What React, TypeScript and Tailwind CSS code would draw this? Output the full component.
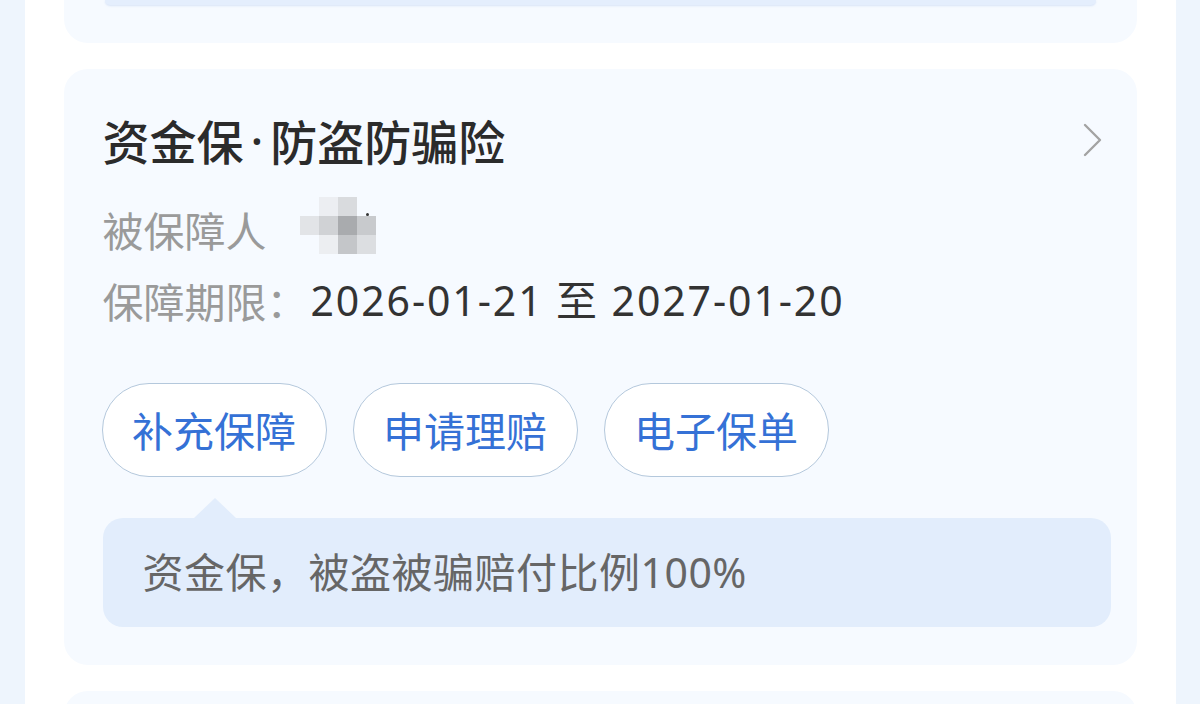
import React from "react";

const mosaic: (string | null)[][] = [
  [null, "#eceef2", "#d9dbde", null],
  ["#e2e4e7", "#d0d2d5", "#a9abae", "#c8cacd"],
  [null, "#eceef1", "#c4c6c9", "#dcdee1"],
];

const latin = { fontFamily: '"Noto Sans", "Noto Sans CJK SC", sans-serif' };

function Chevron() {
  return (
    <svg width="22" height="36" viewBox="0 0 22 36" fill="none">
      <path d="M4 3 L19 18 L4 33" stroke="#a3a3a3" strokeWidth="2.4" strokeLinecap="round" strokeLinejoin="round" />
    </svg>
  );
}

function Mosaic() {
  return (
    <div className="relative ml-[33px] mt-[-8px] grid grid-cols-[19px_19px_19px_19px] grid-rows-[19px_19px_19px]">
      {mosaic.flat().map((c, i) => (
        <div key={i} style={{ background: c ?? "transparent" }} />
      ))}
      <div className="absolute left-[66px] top-[16px] h-[3px] w-[3px] rounded-full bg-[#333]" />
    </div>
  );
}

const actions = ["补充保障", "申请理赔", "电子保单"];

export default function App() {
  return (
    <div
      className="flex h-[704px] w-[1200px] justify-center overflow-hidden bg-[#eef5fd]"
      style={{ fontFamily: '"Noto Sans CJK SC", "Noto Sans", sans-serif' }}
    >
      <div className="flex w-[1151px] shrink-0 flex-col gap-[26px] bg-white px-[39px]">
        {/* previous card, cut off */}
        <div className="rounded-b-[24px] bg-[#f6faff] px-[41px] pb-[38px]">
          <div className="h-[5px] rounded-b-[6px] bg-[#e4eefd] shadow-[0_1px_2px_rgba(150,180,230,0.3)]" />
        </div>

        {/* insurance card */}
        <div className="flex flex-col rounded-[24px] bg-[#f6faff] pb-[38px] pl-[39px] pr-[26px] pt-[43px]">
          <div className="flex h-[56px] items-center justify-between">
            <h1 className="flex text-[47px] font-medium leading-[56px] text-[#2b2b2b]">
              <span>资金保</span>
              <span className="px-[7px]" style={latin}>·</span>
              <span>防盗防骗险</span>
            </h1>
            <div className="mr-[8px]">
              <Chevron />
            </div>
          </div>

          <div className="mt-[36px] flex h-[50px] items-center text-[41px] leading-[50px] text-[#9a9a9a]">
            <span>被保障人</span>
            <Mosaic />
          </div>

          <div className="mt-[21px] flex h-[50px] items-center text-[41px] leading-[50px]">
            <span className="text-[#9a9a9a]">保障期限：</span>
            <span className="ml-[3px] tracking-[1.9px] text-[#333]" style={latin}>
              2026-01-21 至 2027-01-20
            </span>
          </div>

          <div className="-ml-[1px] mt-[58px] flex gap-[26px]">
            {actions.map((a) => (
              <button
                key={a}
                className="flex h-[94px] w-[225px] items-center justify-center rounded-full border border-[#b4c8dc] bg-white text-[41px] text-[#3571d6]"
              >
                {a}
              </button>
            ))}
          </div>

          <div className="relative mt-[41px] flex h-[109px] items-center rounded-[20px] bg-[#e2edfc] pl-[40px]">
            <svg className="absolute left-[90px] top-[-20px]" width="44" height="21" viewBox="0 0 44 21">
              <path d="M0 21 L22 0 L44 21 Z" fill="#e2edfc" />
            </svg>
            <span className="text-[41px] tracking-[0.5px] text-[#666]" style={latin}>
              资金保，被盗被骗赔付比例100%
            </span>
          </div>
        </div>

        {/* next card */}
        <div className="h-[40px] shrink-0 rounded-t-[24px] bg-[#f6faff]" />
      </div>
    </div>
  );
}
